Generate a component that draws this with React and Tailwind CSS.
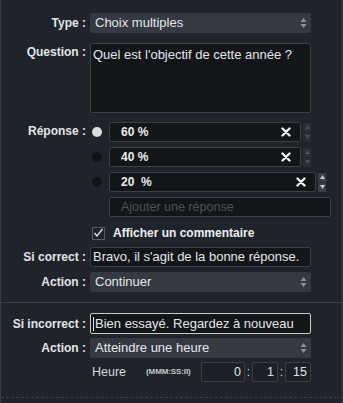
const font = { fontFamily: '"Liberation Sans", Arial, sans-serif' };

function SelectArrows() {
  return (
    <svg width="7" height="12" viewBox="0 0 7 12" className="shrink-0">
      <path d="M3.5 1 L6.5 5 L0.5 5 Z" fill="#8b9097" />
      <path d="M3.5 11 L6.5 7 L0.5 7 Z" fill="#8b9097" />
    </svg>
  );
}

function Select({ value }) {
  return (
    <div className="flex h-[20px] w-[221px] items-center justify-between rounded-[2px] bg-[#353a42] pl-[5px] pr-[4px] text-[13px] text-[#e4e6e8]">
      <span>{value}</span>
      <SelectArrows />
    </div>
  );
}

function Row({ label, children, className = "" }) {
  return (
    <div className={`flex items-center ${className}`}>
      <div className="w-[89px] shrink-0 pr-[4px] text-right text-[12px] font-bold text-[#e2e4e6]">
        {label}
      </div>
      {children}
    </div>
  );
}

function Spinner({ active }) {
  const bg = active ? "bg-[#3a3f47]" : "bg-[#2a2f36]";
  const fill = active ? "#c9ccd0" : "#4a5058";
  return (
    <div className="ml-[2px] flex flex-col gap-[1px]">
      <div className={`flex h-[9px] w-[8px] items-center justify-center ${bg}`}>
        <svg width="5" height="4" viewBox="0 0 5 4">
          <path d="M2.5 0 L5 4 L0 4 Z" fill={fill} />
        </svg>
      </div>
      <div className={`flex h-[9px] w-[8px] items-center justify-center ${bg}`}>
        <svg width="5" height="4" viewBox="0 0 5 4">
          <path d="M2.5 4 L5 0 L0 0 Z" fill={fill} />
        </svg>
      </div>
    </div>
  );
}

function Answer({ text, selected, wide, active }) {
  return (
    <div className="flex items-center">
      <div className="flex w-[19px] justify-start pl-[2px]">
        <div
          className={`h-[10px] w-[10px] rounded-full ${
            selected ? "bg-[#d9dbde]" : "bg-[#111417]"
          }`}
        />
      </div>
      <div
        className={`flex h-[20px] ${
          wide ? "w-[207px]" : "w-[192px]"
        } items-center justify-between rounded-[2px] border border-[#3a4048] bg-[#121619] pl-[11px] pr-[9px] text-[12px] font-bold text-[#eceef0]`}
      >
        <span className="whitespace-pre">{text}</span>
        <svg width="10" height="10" viewBox="0 0 10 10">
          <path d="M1.5 1.5 L8.5 8.5 M8.5 1.5 L1.5 8.5" stroke="#f2f2f2" strokeWidth="2.4" strokeLinecap="round" />
        </svg>
      </div>
      <Spinner active={active} />
    </div>
  );
}

function TimeBox({ value, w }) {
  return (
    <div
      className={`flex h-[20px] ${w} items-center justify-end rounded-[2px] border border-[#3a4048] bg-[#1b2026] pr-[3px] text-[12.5px] text-[#e4e6e8]`}
    >
      {value}
    </div>
  );
}

export default function App() {
  return (
    <div
      className="h-[403px] w-[343px] overflow-hidden border-x border-[#383e46] bg-[#1f242b]"
      style={font}
    >
      <div className="flex flex-col pt-[13px]">
        <Row label="Type :">
          <Select value="Choix multiples" />
        </Row>

        <Row label="Question :" className="mt-[10px] !items-start">
          <div className="h-[70px] w-[221px] rounded-[2px] border border-[#3a4048] bg-[#121619] px-[2px] pt-[1px] text-[13px] text-[#e4e6e8]">
            Quel est l'objectif de cette année ?
          </div>
        </Row>

        <Row label="Réponse :" className="mt-[9px] !items-start">
          <div className="flex flex-col gap-[5px]">
            <Answer text="60 %" selected />
            <Answer text="40 %" />
            <Answer text="20  %" wide active />
            <div className="ml-[19px] flex h-[20px] w-[222px] items-center rounded-[2px] border border-[#3a4048] bg-[#121619] pl-[11px] text-[12.5px] text-[#4d535a]">
              Ajouter une réponse
            </div>
          </div>
        </Row>

        <div className="mt-[7px] flex items-center pl-[91px]">
          <div className="flex h-[13px] w-[13px] items-center justify-center border border-[#565c64] bg-[#1f242b]">
            <svg width="11" height="10" viewBox="0 0 11 10">
              <path d="M1.5 5 L4 8 L9.5 1" stroke="#e4e6e8" strokeWidth="1.3" fill="none" />
            </svg>
          </div>
          <span className="ml-[8px] text-[12px] font-bold text-[#eceef0]">
            Afficher un commentaire
          </span>
        </div>

        <Row label="Si correct :" className="mt-[5px]">
          <div className="flex h-[20px] w-[221px] items-center rounded-[2px] border border-[#3a4048] bg-[#121619] px-[2px] text-[13px] text-[#e4e6e8]">
            Bravo, il s'agit de la bonne réponse.
          </div>
        </Row>

        <Row label="Action :" className="mt-[5px]">
          <Select value="Continuer" />
        </Row>

        <div className="mt-[10px] h-px w-full bg-[#3a4048]" />

        <Row label="Si incorrect :" className="mt-[10px]">
          <div className="flex h-[21px] w-[221px] items-center rounded-[2px] border border-[#c8ccd0] bg-[#121619] px-[2px] text-[13px] text-[#e4e6e8]">
            <span className="mr-[1px] h-[14px] w-px bg-[#e4e6e8]" />
            Bien essayé. Regardez à nouveau
          </div>
        </Row>

        <Row label="Action :" className="mt-[4px]">
          <Select value="Atteindre une heure" />
        </Row>

        <div className="mt-[4px] flex items-center">
          <span className="ml-[91px] w-[54px] text-[12.5px] text-[#d4d7da]">Heure</span>
          <span className="w-[55px] text-[8px] font-bold tracking-[-0.1px] text-[#c4c7cb]">(MMM:SS:II)</span>
          <TimeBox value="0" w="w-[44px]" />
          <span className="w-[7px] text-center text-[12px] text-[#d4d7da]">:</span>
          <TimeBox value="1" w="w-[26px]" />
          <span className="w-[7px] text-center text-[12px] text-[#d4d7da]">:</span>
          <TimeBox value="15" w="w-[26px]" />
        </div>

        <div className="mt-[15px] w-full border-t border-dashed border-[#3a4048]" />
      </div>
    </div>
  );
}
